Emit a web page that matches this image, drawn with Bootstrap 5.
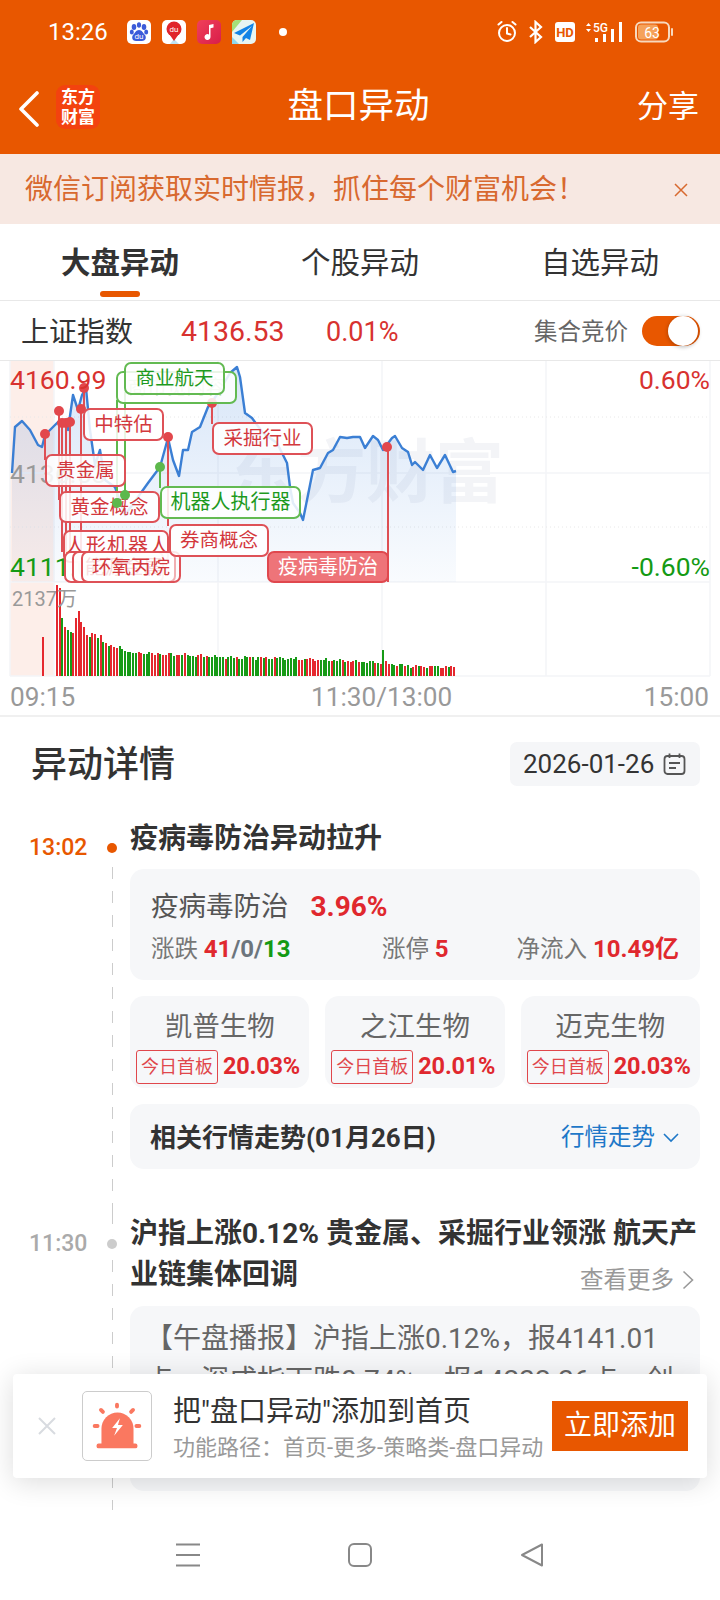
<!DOCTYPE html>
<html lang="zh-CN">
<head>
<meta charset="utf-8">
<title>盘口异动</title>
<link rel="stylesheet" href="https://cdn.jsdelivr.net/npm/bootstrap@5.3.0/dist/css/bootstrap.min.css">
<style>
html,body{margin:0;height:1600px;overflow:hidden;background:#fff}
body{font-family:Roboto,"Noto Sans CJK SC",sans-serif;color:#333;width:720px}
.app-shell{height:1600px;position:relative;overflow:hidden}
.top-head{background:#E85700;height:154px;color:#fff}
.status-row{height:63px;padding:0 37px 0 48px}
.status-time{font-size:24px;line-height:1;width:79px}
.status-left{gap:11px}
.status-dot{width:8px;height:8px;border-radius:50%;background:#fff;margin-left:12px}
.nav-row{height:91px;padding:0 21px 0 18px}
.nav-side{width:120px}
.nav-title{font-size:35.5px;line-height:1;flex:1;text-align:center;margin-top:-4px}
.nav-share{font-size:31px;line-height:1;text-align:right;margin-top:-4px}
.brand-tile{width:44px;height:44px;border-radius:9px;background:#F3420F;margin-left:16px;font-size:17px;line-height:20px;font-weight:700;text-align:center;padding-top:2px;margin-top:-4px}
.sub-banner{height:70px;background:#F7E8E2;color:#D8692F;font-size:28px;padding:2px 32px 0 25px}
.tab-row{height:77px;border-bottom:1px solid #e8e8e8}
.tab-cell{flex:0 0 240px;text-align:center;font-size:29.5px;line-height:1;padding-top:25px;position:relative;color:#333;height:76px}
.tab-on{font-weight:700}
.tab-mark{display:block;width:40px;height:6px;border-radius:3px;background:#E85700;margin:12px auto 0}
.index-row{height:60px;padding:0 20px 0 21px;border-bottom:1px solid #e8e8e8}
.index-name{font-size:28px;width:160px;padding-top:4px}
.index-num{font-size:28.5px;color:#D8322F;width:145px;padding-top:4px}
.index-pct{font-size:27px;color:#D8322F;padding-top:4px}
.auction-label{font-size:23.5px;color:#666;margin-right:14px;padding-top:4px}
.switch-track{width:58px;height:30px;border-radius:15px;background:#E85700;padding:0 2px 0 0}
.switch-knob{width:30px;height:30px;border-radius:50%;background:#fff;box-shadow:0 1px 4px rgba(0,0,0,.3)}
.chart-area{position:relative;height:316px}
.chart-svg{display:block;width:720px;height:316px}
.dots-over{left:0;top:0;z-index:9;pointer-events:none}
.axis-row{height:40px;padding:0 11px 0 10px;color:#999;font-size:26.2px;line-height:40px;border-bottom:2px solid #f0f0f0}
.axis-left{width:301px}
.plabel{position:absolute;line-height:1;font-size:26.5px}
.p-hi{left:10px;top:6px;color:#D8322F}
.p-mid{left:10px;top:100px;color:#999}
.p-lo{left:10px;top:193px;color:#149A14}
.p-rhi{right:10px;top:6px;color:#D8322F}
.p-rlo{right:10px;top:193px;color:#149A14}
.p-vol{left:12px;top:228px;color:#999;font-size:20px}
.ghost-text{font-size:69px;font-weight:700;fill:#F3F4F7}
.ctag{position:absolute;height:33px;line-height:29px;text-align:center;font-size:19.5px;border-radius:7px;background:rgba(255,255,255,.86);white-space:nowrap}
.ctag-r{border:2px solid #DE5157;color:#D3383D}
.ctag-g{border:2px solid #63BA52;color:#1E9A1E}
.ctag-f{background:#EE7479;color:#fff;border:2px solid #E0484E}
.t-a{left:116px;top:10px;width:121px;color:#B9DFB2;z-index:1}
.t-b{left:124px;top:1px;width:101px;z-index:2}
.t-c{left:83px;top:47px;width:81px;z-index:3}
.t-d{left:212px;top:61px;width:101px;z-index:3}
.t-e{left:45px;top:93px;width:81px;z-index:5}
.t-f{left:59px;top:130px;width:101px;z-index:5;height:32px}
.t-g{left:160px;top:125px;width:141px;font-size:20px;z-index:4}
.t-h{left:63px;top:169px;width:106px;z-index:3;font-size:20px;letter-spacing:1px}
.t-i{left:169px;top:163px;width:100px;z-index:7}
.t-j{left:64px;top:190px;width:100px;z-index:4;height:32px}
.t-k{left:72px;top:190px;width:104px;z-index:5;height:32px;color:#F0B7B9}
.t-l{left:81px;top:190px;width:100px;z-index:6;height:32px;background:rgba(255,255,255,.55)}
.t-m{left:267px;top:190px;width:122px;z-index:5;height:32px;font-size:20px}
.detail-pane{height:793px;overflow:hidden}
.detail-head{padding:25px 20px 31px 31px}
.detail-title{font-size:36px;line-height:44px;font-weight:500;position:relative;top:1px}
.date-pill{height:44px;width:190px;border-radius:7px;background:#F5F6F8;font-size:26px;padding-left:13px}
.date-icon{margin-left:9px}
.tl-item{padding:0 20px 0 29px}
.tl-time{width:78px;font-size:23px;line-height:30px;font-weight:500;flex:none}
.time-one{margin-top:16px}
.time-two{margin-top:17px}
.tl-rail{width:10px;flex:none;background:repeating-linear-gradient(to bottom,#ccc 0,#ccc 12px,transparent 12px,transparent 24px);background-size:1px 100%;background-repeat:no-repeat;background-position:center}
.tl-rail-first{margin-top:26px}
.tl-spot{display:block;width:10px;height:10px;border-radius:50%;box-shadow:0 0 0 3px #fff}
.tl-body{margin-left:13px;flex:1;min-width:0}
.orange-text{color:#E85700}
.grey-text{color:#aaa}
.spot-o{background:#E85700}
.spot-g{background:#ccc;margin-top:27px}
.tl-title{font-size:28px;line-height:40px;font-weight:700;color:#333;padding-top:2px}
.title-line{line-height:41px;padding-top:1px}
.title-line-next{line-height:41px;padding-top:0}
.body-one{padding-bottom:43px}
.body-two{padding-bottom:22px}
.soft-box{background:#F6F7F9;border-radius:14px}
.sector-box{margin-top:10px;height:111px;padding:17px 21px 0 21px}
.sector-name{font-size:27.5px;line-height:36px;color:#555;margin-right:22px}
.up{color:#E0282E}
.dn{color:#149A14}
.sector-pct{font-size:28px;font-weight:700}
.sector-stats{font-size:23.5px;color:#777;margin-top:4px;line-height:34px}
.sector-stats b{font-weight:700;font-size:24px}
.stat-a{width:231px}
.stat-b{width:130px}
.stock-box{height:92px;padding-top:13px;text-align:center}
.stock-name{font-size:27.5px;line-height:36px;color:#666}
.stock-line{padding:0 6px;margin-top:4px}
.first-badge{font-size:18px;line-height:32px;height:34px;width:82px;border:1px solid #E0474C;border-radius:3px;color:#E0474C;flex:none}
.stock-pct{font-size:23.5px;font-weight:700;margin-left:5px;white-space:nowrap;letter-spacing:-.2px}
.trend-box{margin-top:16px;height:65px;padding:3px 21px 0 20px}
.trend-title{font-size:26px;font-weight:700}
.trend-link{font-size:23.5px;color:#1E78C8}
.more-link{font-size:23.5px;color:#999;line-height:34px;padding:0 6px 0 0;position:relative;top:2px}
.report-box{margin-top:11px;height:185px;overflow:hidden;padding:12px 12px 0 15px;font-size:28px;line-height:42px;color:#666;white-space:nowrap}
.add-pop{position:absolute;left:13px;top:1374px;width:694px;height:104px;background:#fff;border-radius:4px;box-shadow:0 4px 28px rgba(0,0,0,.14);z-index:20;padding-left:25px}
.icon-frame{width:70px;height:70px;border:1px solid #ccc;border-radius:5px;margin-left:26px;flex:none}
.pop-text{margin-left:21px;width:379px;flex:none;padding-top:5px}
.pop-title{font-size:28px;line-height:36px;color:#333;white-space:nowrap}
.pop-sub{font-size:22px;line-height:30px;color:#999;white-space:nowrap;margin-top:3px}
.pop-btn{width:136px;height:50px;background:#E85700;color:#fff;font-size:28px;line-height:50px;text-align:center;flex:none;border:0;padding:0;border-radius:0}
.sys-nav{height:88px;padding-top:32px;padding-left:102px}
.sys-cell{width:172px;text-align:center}
</style>
</head>
<body>
<div class="app-shell d-flex flex-column">
  <header class="top-head">
    <div class="status-row d-flex align-items-center">
      <span class="status-time">13:26</span>
      <span class="d-flex align-items-center status-left">
        <svg width="24" height="24" viewBox="0 0 24 24"><rect width="24" height="24" rx="5" fill="#fff"/><g fill="#3B5BD9"><ellipse cx="7" cy="7" rx="2.3" ry="3"/><ellipse cx="12" cy="5" rx="2.1" ry="2.8"/><ellipse cx="17" cy="7" rx="2.3" ry="3"/><ellipse cx="4.8" cy="12" rx="2" ry="2.6"/><ellipse cx="19.2" cy="12" rx="2" ry="2.6"/><path d="M12 10c-3 0-4 3-6 5-2 3 0 6 3 6h6c3 0 5-3 3-6-2-2-3-5-6-5z"/></g><text x="12" y="19" font-size="8" fill="#fff" text-anchor="middle" font-family="Roboto">du</text></svg>
        <svg width="24" height="24" viewBox="0 0 24 24"><rect width="24" height="24" rx="5" fill="#fff"/><path d="M8 24l4-5 5 5z" fill="#BFE3F2"/><circle cx="12" cy="9" r="7.5" fill="#E0252B"/><path d="M6.500 13l5.500 8 5.500-8z" fill="#E0252B"/><text x="12" y="11.500" font-size="8" fill="#fff" text-anchor="middle" font-family="Roboto">du</text></svg>
        <svg width="24" height="24" viewBox="0 0 24 24"><defs><linearGradient id="mus" x1="0" y1="0" x2="1" y2="1"><stop offset="0" stop-color="#F0405A"/><stop offset="1" stop-color="#D81E4A"/></linearGradient></defs><rect width="24" height="24" rx="5" fill="url(#mus)"/><path d="M12 5l4.500-1v3.500l-3 .8V17a3 3 0 1 1-1.500-2.600z" fill="#fff"/></svg>
        <svg width="24" height="24" viewBox="0 0 24 24"><rect width="24" height="24" rx="5" fill="#E8F5F2"/><path d="M0 5a5 5 0 0 1 5-5h5L0 12z" fill="#A6E07A"/><path d="M0 24V17l7 7z" fill="#8FD8EE"/><path d="M22 3L2 13l6 2.500L20 6 10.500 17v5l3.500-4 4 2z" fill="#1384E6"/></svg>
        <span class="status-dot"></span>
      </span>
      <svg class="ms-auto" width="186" height="24" viewBox="0 0 186 24">
        <g fill="none" stroke="#fff" stroke-width="2"><circle cx="10" cy="13" r="8"/><path d="M10 8v5.500l3.500 1M1.500 4.500l3-2.500M18.500 4.500l-3-2.500" stroke-linecap="round"/></g>
        <path d="M33 7l11 10-5.500 5V2l5.500 5-11 10" fill="none" stroke="#fff" stroke-width="2.200"/>
        <rect x="58" y="2" width="20" height="20" rx="3" fill="#fff"/>
        <text x="68" y="17" font-size="13" font-weight="700" fill="#E85700" text-anchor="middle" font-family="Roboto">HD</text>
        <path d="M89 6l2.500-3 2.500 3zM89 9l2.500 3 2.500-3z" fill="#fff"/>
        <text x="96" y="12" font-size="12" fill="#fff" font-family="Roboto" font-weight="500">5G</text>
        <g fill="#fff"><rect x="98" y="18" width="3" height="4"/><rect x="106" y="14" width="3" height="8"/><rect x="114" y="9" width="3" height="13"/><rect x="122" y="2" width="3" height="20"/></g>
        <rect x="139" y="2.500" width="33" height="19" rx="5" fill="none" stroke="#F7D9BE" stroke-width="2"/>
        <rect x="141" y="4.500" width="20" height="15" rx="3" fill="#F5A25A"/>
        <rect x="174" y="8" width="2" height="8" rx="1" fill="#F7D9BE"/>
        <text x="155" y="17.500" font-size="14" fill="#fff" text-anchor="middle" font-family="Roboto">63</text>
      </svg>
    </div>
    <div class="nav-row d-flex align-items-center">
      <div class="nav-side d-flex align-items-center">
        <svg width="22" height="36" viewBox="0 0 22 36"><path d="M19 2L3 18l16 16" fill="none" stroke="#fff" stroke-width="3.600" stroke-linecap="round" stroke-linejoin="round"/></svg>
        <div class="brand-tile">东方<br>财富</div>
      </div>
      <div class="nav-title">盘口异动</div>
      <div class="nav-side nav-share">分享</div>
    </div>
  </header>

  <div class="sub-banner d-flex align-items-center justify-content-between">
    <span>微信订阅获取实时情报，抓住每个财富机会！</span>
    <svg width="14" height="14" viewBox="0 0 14 14"><path d="M1 1l12 12M13 1L1 13" stroke="#D8692F" stroke-width="1.500"/></svg>
  </div>

  <nav class="tab-row d-flex">
    <div class="tab-cell tab-on">大盘异动<span class="tab-mark"></span></div>
    <div class="tab-cell">个股异动</div>
    <div class="tab-cell">自选异动</div>
  </nav>

  <div class="index-row d-flex align-items-center">
    <span class="index-name">上证指数</span>
    <span class="index-num">4136.53</span>
    <span class="index-pct">0.01%</span>
    <span class="auction-label ms-auto">集合竞价</span>
    <span class="switch-track d-flex justify-content-end"><span class="switch-knob"></span></span>
  </div>

  <section class="chart-area">
    <svg class="chart-svg" viewBox="0 361 720 316" xmlns="http://www.w3.org/2000/svg">
      <defs><linearGradient id="areaFill" x1="0" y1="0" x2="0" y2="1"><stop offset="0" stop-color="#3C82DC" stop-opacity=".2"/><stop offset="1" stop-color="#3C82DC" stop-opacity=".03"/></linearGradient></defs>
      <rect x="10" y="361" width="44" height="315" fill="#FDEEE9"/>
      <g stroke="#F4F5F7" stroke-width="1.500" fill="none">
        <path d="M10 361V676M54 361V676M218 361V676M382 361V676M546 361V676M710 361V676"/>
        <path d="M10 473H710M10 582H710M10 676H710"/>
      </g>
      <path d="M10 417H710M10 527H710" stroke="#E8E8E8" stroke-width="1" stroke-dasharray="1 3"/>
      <text class="ghost-text" x="228" y="497">东方财富</text>
      <path fill="url(#areaFill)" d="M12 582V473L15 427L22 421L30 430L38 445L42 447L45 435L58 422L62 420L68 430L73 395L78 410L82 395L86 388L90 430L95 465L100 450L105 480L115 487L125 515L148 483L160 467L168 438L173 460L179 476L183 450L188 450L192 432L200 427L208 407L212 402L220 390L230 373L237 367L240 377L245 413L252 418L263 433L277 443L287 463L290 487L293 503L300 513L303 520L307 500L313 470L320 468L328 453L333 450L340 437L347 438L353 437L360 437L365 448L373 436L378 440L383 450L392 438L395 436L402 448L408 452L412 465L415 462L423 470L430 455L437 468L445 455L453 472L456 471V582Z"/>
      <path fill="none" stroke="#3B7FD4" stroke-width="2.400" stroke-linejoin="round" d="M12 473L15 427L22 421L30 430L38 445L42 447L45 435L58 422L62 420L68 430L73 395L78 410L82 395L86 388L90 430L95 465L100 450L105 480L115 487L125 515L148 483L160 467L168 438L173 460L179 476L183 450L188 450L192 432L200 427L208 407L212 402L220 390L230 373L237 367L240 377L245 413L252 418L263 433L277 443L287 463L290 487L293 503L300 513L303 520L307 500L313 470L320 468L328 453L333 450L340 437L347 438L353 437L360 437L365 448L373 436L378 440L383 450L392 438L395 436L402 448L408 452L412 465L415 462L423 470L430 455L437 468L445 455L453 472L456 471"/>
      <g id="volBars" shape-rendering="crispEdges"></g>
      <g stroke="#DE4F54" stroke-width="2" fill="none"><path d="M45 434V460M59 411V500M62 423V552M66 423V552M70 422V552M81 409V552M84 388V410M168 437V526M212 403V424M388 448V582"/></g>
      <g stroke="#5DB84C" stroke-width="2" fill="none"><path d="M117 400V503M125 392V495M160 467V488"/></g>
      <g fill="#E2474C"><circle cx="45" cy="434" r="5"/><circle cx="59" cy="411" r="5"/><circle cx="62" cy="423" r="5"/><circle cx="66" cy="423" r="5"/><circle cx="70" cy="422" r="5"/><circle cx="81" cy="409" r="5"/><circle cx="84" cy="388" r="5"/><circle cx="168" cy="437" r="5"/><circle cx="212" cy="403" r="5"/><circle cx="387" cy="447" r="5"/></g>
    </svg>
    <span class="plabel p-hi">4160.99</span>
    <span class="plabel p-mid">4136.53</span>
    <span class="plabel p-lo">4111.07</span>
    <span class="plabel p-rhi">0.60%</span>
    <span class="plabel p-rlo">-0.60%</span>
    <span class="plabel p-vol">2137万</span>
    <span class="ctag ctag-g t-a">商市览内容</span>
    <span class="ctag ctag-g t-b">商业航天</span>
    <span class="ctag ctag-r t-c">中特估</span>
    <span class="ctag ctag-r t-d">采掘行业</span>
    <span class="ctag ctag-r t-e">贵金属</span>
    <span class="ctag ctag-r t-f">黄金概念</span>
    <span class="ctag ctag-g t-g">机器人执行器</span>
    <span class="ctag ctag-r t-h">人形机器人</span>
    <span class="ctag ctag-r t-i">券商概念</span>
    <span class="ctag ctag-r t-j"></span>
    <span class="ctag ctag-r t-k">能源金属</span>
    <span class="ctag ctag-r t-l">环氧丙烷</span>
    <span class="ctag ctag-f t-m">疫病毒防治</span>
    <svg class="position-absolute dots-over" width="200" height="200" viewBox="0 361 200 200"><circle cx="125" cy="495" r="5" fill="#5DB84C"/><circle cx="117" cy="503" r="5" fill="#5DB84C"/><circle cx="160" cy="467" r="5" fill="#5DB84C"/></svg>
  </section>

  <div class="axis-row d-flex">
    <span class="axis-left">09:15</span><span>11:30/13:00</span><span class="ms-auto">15:00</span>
  </div>

  <main class="detail-pane">
    <div class="detail-head d-flex align-items-center justify-content-between">
      <h2 class="detail-title m-0">异动详情</h2>
      <div class="date-pill d-flex align-items-center">
        <span>2026-01-26</span>
        <svg class="date-icon" width="23" height="24" viewBox="0 0 23 24"><g fill="none" stroke="#555" stroke-width="1.800"><rect x="1.500" y="4" width="20" height="18" rx="3"/><path d="M6.500 1.500V6M16.500 1.500V6M6 11h11M6 16h7"/></g></svg>
      </div>
    </div>

    <article class="tl-item d-flex">
      <div class="tl-time orange-text time-one">13:02</div>
      <div class="tl-rail tl-rail-first"><span class="tl-spot spot-o"></span></div>
      <div class="tl-body body-one">
        <div class="tl-title">疫病毒防治异动拉升</div>
        <div class="soft-box sector-box">
          <div class="d-flex align-items-center"><span class="sector-name">疫病毒防治</span><span class="sector-pct up">3.96%</span></div>
          <div class="sector-stats d-flex">
            <span class="stat-a">涨跌 <b class="up">41</b><b class="text-secondary">/0/</b><b class="dn">13</b></span>
            <span class="stat-b">涨停 <b class="up">5</b></span>
            <span class="ms-auto">净流入 <b class="up">10.49亿</b></span>
          </div>
        </div>
        <div class="row g-3 mt-0">
          <div class="col-4"><div class="soft-box stock-box"><div class="stock-name">凯普生物</div><div class="stock-line d-flex align-items-center"><span class="first-badge">今日首板</span><span class="stock-pct up">20.03%</span></div></div></div>
          <div class="col-4"><div class="soft-box stock-box"><div class="stock-name">之江生物</div><div class="stock-line d-flex align-items-center"><span class="first-badge">今日首板</span><span class="stock-pct up">20.01%</span></div></div></div>
          <div class="col-4"><div class="soft-box stock-box"><div class="stock-name">迈克生物</div><div class="stock-line d-flex align-items-center"><span class="first-badge">今日首板</span><span class="stock-pct up">20.03%</span></div></div></div>
        </div>
        <div class="soft-box trend-box d-flex align-items-center justify-content-between">
          <span class="trend-title">相关行情走势(01月26日)</span>
          <span class="trend-link d-flex align-items-center">行情走势<svg class="ms-2" width="16" height="10" viewBox="0 0 16 10"><path d="M1 1l7 7 7-7" fill="none" stroke="#1E78C8" stroke-width="1.600"/></svg></span>
        </div>
      </div>
    </article>

    <article class="tl-item d-flex">
      <div class="tl-time grey-text time-two">11:30</div>
      <div class="tl-rail"><span class="tl-spot spot-g"></span></div>
      <div class="tl-body body-two">
        <div class="tl-title title-line">沪指上涨0.12% 贵金属、采掘行业领涨 航天产</div>
        <div class="d-flex justify-content-between align-items-end">
          <div class="tl-title title-line-next">业链集体回调</div>
          <span class="more-link d-flex align-items-center">查看更多<svg class="ms-2" width="12" height="20" viewBox="0 0 12 20"><path d="M1.500 1.500l9 8.500-9 8.500" fill="none" stroke="#999" stroke-width="1.600"/></svg></span>
        </div>
        <div class="soft-box report-box">【午盘播报】沪指上涨0.12%，报4141.01<br>点，深成指下跌0.74%，报14232.36点，创</div>
      </div>
    </article>
  </main>

  <div class="add-pop d-flex align-items-center">
    <svg width="18" height="18" viewBox="0 0 18 18"><path d="M1 1l16 16M17 1L1 17" stroke="#D8DBE0" stroke-width="2"/></svg>
    <div class="icon-frame">
      <svg width="68" height="68" viewBox="0 0 70 70"><g fill="#FA7860"><path d="M19 54V38a16.500 17 0 0 1 33 0v16z"/><rect x="14" y="53" width="42" height="5" rx="2"/></g><g stroke="#FA7860" stroke-width="4" stroke-linecap="round"><path d="M35 13v2M18.500 18.500l2 2M51.500 18.500l-2 2M12 35h3M55 35h3"/></g><path d="M38 27l-8 10h5l-3 8 9-11h-5z" fill="#fff"/></svg>
    </div>
    <div class="pop-text">
      <div class="pop-title">把"盘口异动"添加到首页</div>
      <div class="pop-sub">功能路径：首页-更多-策略类-盘口异动</div>
    </div>
    <button type="button" class="btn pop-btn">立即添加</button>
  </div>

  <div class="sys-nav d-flex">
    <div class="sys-cell"><svg width="24" height="24" viewBox="0 0 24 24"><path d="M0 1.500h24M0 12h24M0 22.500h24" stroke="#888" stroke-width="2"/></svg></div>
    <div class="sys-cell"><svg width="24" height="24" viewBox="0 0 24 24"><rect x="1" y="1" width="22" height="22" rx="5" fill="none" stroke="#888" stroke-width="2"/></svg></div>
    <div class="sys-cell"><svg width="24" height="24" viewBox="0 0 24 24"><path d="M22 1.500v21L2 12z" fill="none" stroke="#888" stroke-width="2" stroke-linejoin="round"/></svg></div>
  </div>
</div>
<script>
(function(){
  var g=document.getElementById('volBars'),ns='http://www.w3.org/2000/svg';
  function bar(x,h,c){var r=document.createElementNS(ns,'rect');r.setAttribute('x',x);r.setAttribute('y',Math.round(676-h));r.setAttribute('width',2);r.setAttribute('height',Math.round(h));r.setAttribute('fill',c);g.appendChild(r);}
  var red='#E5282E',green='#169A16';
  bar(42,39,red);
  var head=[91,88,58,49,46,44,43,58,65,54,49,41,39,43,42,38,41,34,33,30,31,29,28,30,27,25,24,24,23,23,24,23,22,22,24,23,21,23,22,21];
  var knots=[[40,22],[60,19],[80,18],[100,16],[120,13],[130,10],[146,9]];
  for(var i=0;i<147;i++){
    var h;
    if(i<head.length){h=head[i];}
    else{
      var k=0;while(k<knots.length-2&&knots[k+1][0]<i)k++;
      var a=knots[k],b=knots[k+1],t=(i-a[0])/(b[0]-a[0]);
      h=a[1]+(b[1]-a[1])*t+2*Math.sin(i*1.7)*Math.cos(i*.6);
    }
    if(i===120)h=26;
    var c=(Math.sin(i*12.9898)*43758.5453%1+1)%1>.5?red:green;
    if(i<2||i===7||i===8)c=red;
    bar(Math.round(56+i*2.72),Math.max(3,h),c);
  }
})();
</script>
</body>
</html>
